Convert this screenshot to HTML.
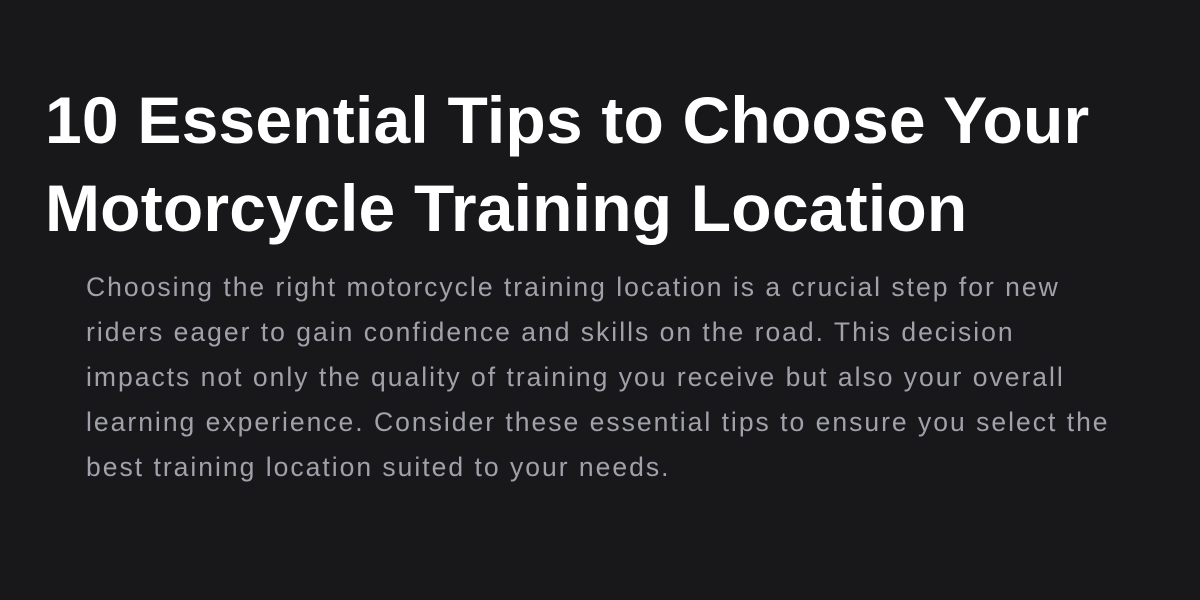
<!DOCTYPE html>
<html><head><meta charset="utf-8"><style>
html,body{margin:0;padding:0;width:1200px;height:600px;overflow:hidden;background:#18181b;}
h1{position:absolute;left:45px;top:76px;margin:0;font-family:"Liberation Sans",sans-serif;font-weight:700;font-size:66px;line-height:88px;color:#fff;letter-spacing:0.2px;white-space:nowrap;}
p{position:absolute;left:86px;top:265px;margin:0;width:1100px;font-family:"Liberation Sans",sans-serif;font-size:26.5px;line-height:45px;color:#a1a1aa;letter-spacing:2px;white-space:nowrap;}
</style></head><body>
<h1>10 Essential Tips to Choose Your<br>Motorcycle Training Location</h1>
<p>Choosing the right motorcycle training location is a crucial step for new<br>riders eager to gain confidence and skills on the road. This decision<br>impacts not only the quality of training you receive but also your overall<br>learning experience. Consider these essential tips to ensure you select the<br>best training location suited to your needs.</p>
</body></html>
